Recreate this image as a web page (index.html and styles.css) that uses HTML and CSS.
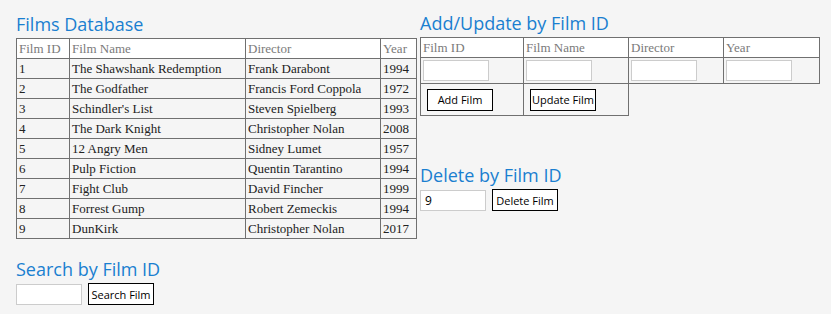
FILE: index.html
```html
<!DOCTYPE html>
<html>
<head>
<meta charset="utf-8">
<link rel="stylesheet" href="styles.css">
</head>
<body>
<div class="page">
  <section class="col col-left">
    <h2 class="title">Films Database</h2>
    <table class="grid films">
      <tr class="head"><td class="c-id">Film ID</td><td class="c-name">Film Name</td><td class="c-dir">Director</td><td class="c-year">Year</td></tr>
      <tr><td>1</td><td>The Shawshank Redemption</td><td>Frank Darabont</td><td>1994</td></tr>
      <tr><td>2</td><td>The Godfather</td><td>Francis Ford Coppola</td><td>1972</td></tr>
      <tr><td>3</td><td>Schindler's List</td><td>Steven Spielberg</td><td>1993</td></tr>
      <tr><td>4</td><td>The Dark Knight</td><td>Christopher Nolan</td><td>2008</td></tr>
      <tr><td>5</td><td>12 Angry Men</td><td>Sidney Lumet</td><td>1957</td></tr>
      <tr><td>6</td><td>Pulp Fiction</td><td>Quentin Tarantino</td><td>1994</td></tr>
      <tr><td>7</td><td>Fight Club</td><td>David Fincher</td><td>1999</td></tr>
      <tr><td>8</td><td>Forrest Gump</td><td>Robert Zemeckis</td><td>1994</td></tr>
      <tr><td>9</td><td>DunKirk</td><td>Christopher Nolan</td><td>2017</td></tr>
    </table>
    <h2 class="title title-search">Search by Film ID</h2>
    <div class="field-row">
      <input class="box" type="text">
      <button class="btn">Search Film</button>
    </div>
  </section>
  <section class="col col-right">
    <h2 class="title title-add">Add/Update by Film ID</h2>
    <table class="grid editor">
      <tr class="head"><td class="e-id">Film ID</td><td class="e-name">Film Name</td><td class="e-dir">Director</td><td class="e-year">Year</td></tr>
      <tr class="inputs"><td><input class="box" type="text"></td><td><input class="box" type="text"></td><td><input class="box" type="text"></td><td><input class="box" type="text"></td></tr>
      <tr class="actions"><td><button class="btn">Add Film</button></td><td><button class="btn">Update Film</button></td></tr>
    </table>
    <h2 class="title title-delete">Delete by Film ID</h2>
    <div class="field-row">
      <input class="box" type="text" value="9">
      <button class="btn">Delete Film</button>
    </div>
  </section>
</div>
</body>
</html>
```
FILE: styles.css
```css
html, body {
  margin: 0;
  padding: 0;
  background: #f5f5f5;
}
.page {
  display: flex;
  gap: 4px;
  padding: 0 0 0 16px;
}
.col {
  display: flex;
  flex-direction: column;
  align-items: flex-start;
}
.col-left { width: 400px; }
.col-right { width: 400px; }
.title {
  font-family: "Open Sans", sans-serif;
  font-weight: 400;
  font-size: 18px;
  line-height: 22px;
  color: #1a7fd0;
  margin: 13px 0 3px 0;
}
.title-add { margin-top: 12px; }
.grid {
  border-collapse: collapse;
  font-family: "Liberation Serif", serif;
  font-size: 13px;
  color: #222;
}
.grid td {
  border: 1px solid #707070;
  padding: 0 2px;
  height: 19px;
  line-height: 19px;
  white-space: nowrap;
  vertical-align: middle;
}
.grid .head td {
  background: #fff;
  color: #7a7a7a;
}
.films { width: 401px; }
.films .c-id { width: 48px; }
.films .c-name { width: 171px; }
.films .c-dir { width: 130px; }
.films .c-year { width: 31px; }
.editor { width: 400px; }
.editor .e-id { width: 98px; }
.editor .e-name { width: 100px; }
.editor .e-dir { width: 90px; }
.editor .e-year { width: 91px; }
.editor .inputs td { height: 25px; }
.editor .actions td { height: 31px; }
.box {
  box-sizing: border-box;
  width: 66px;
  height: 21px;
  border: 1px solid #ccc;
  background: #fff;
  font-family: "Open Sans", sans-serif;
  font-size: 12px;
  padding: 0 4px;
  margin: 0;
  display: block;
}
.btn {
  box-sizing: border-box;
  width: 66px;
  height: 22px;
  border: 1px solid #000;
  background: #fff;
  font-family: "Open Sans", sans-serif;
  font-size: 11px;
  color: #000;
  padding: 0;
  margin: 0;
  display: block;
}
.editor .actions .btn { margin-left: 4px; }
.field-row {
  display: flex;
  align-items: center;
  gap: 6px;
}
.title-search { margin-top: 19px; }
.title-delete { margin-top: 48px; }
```
